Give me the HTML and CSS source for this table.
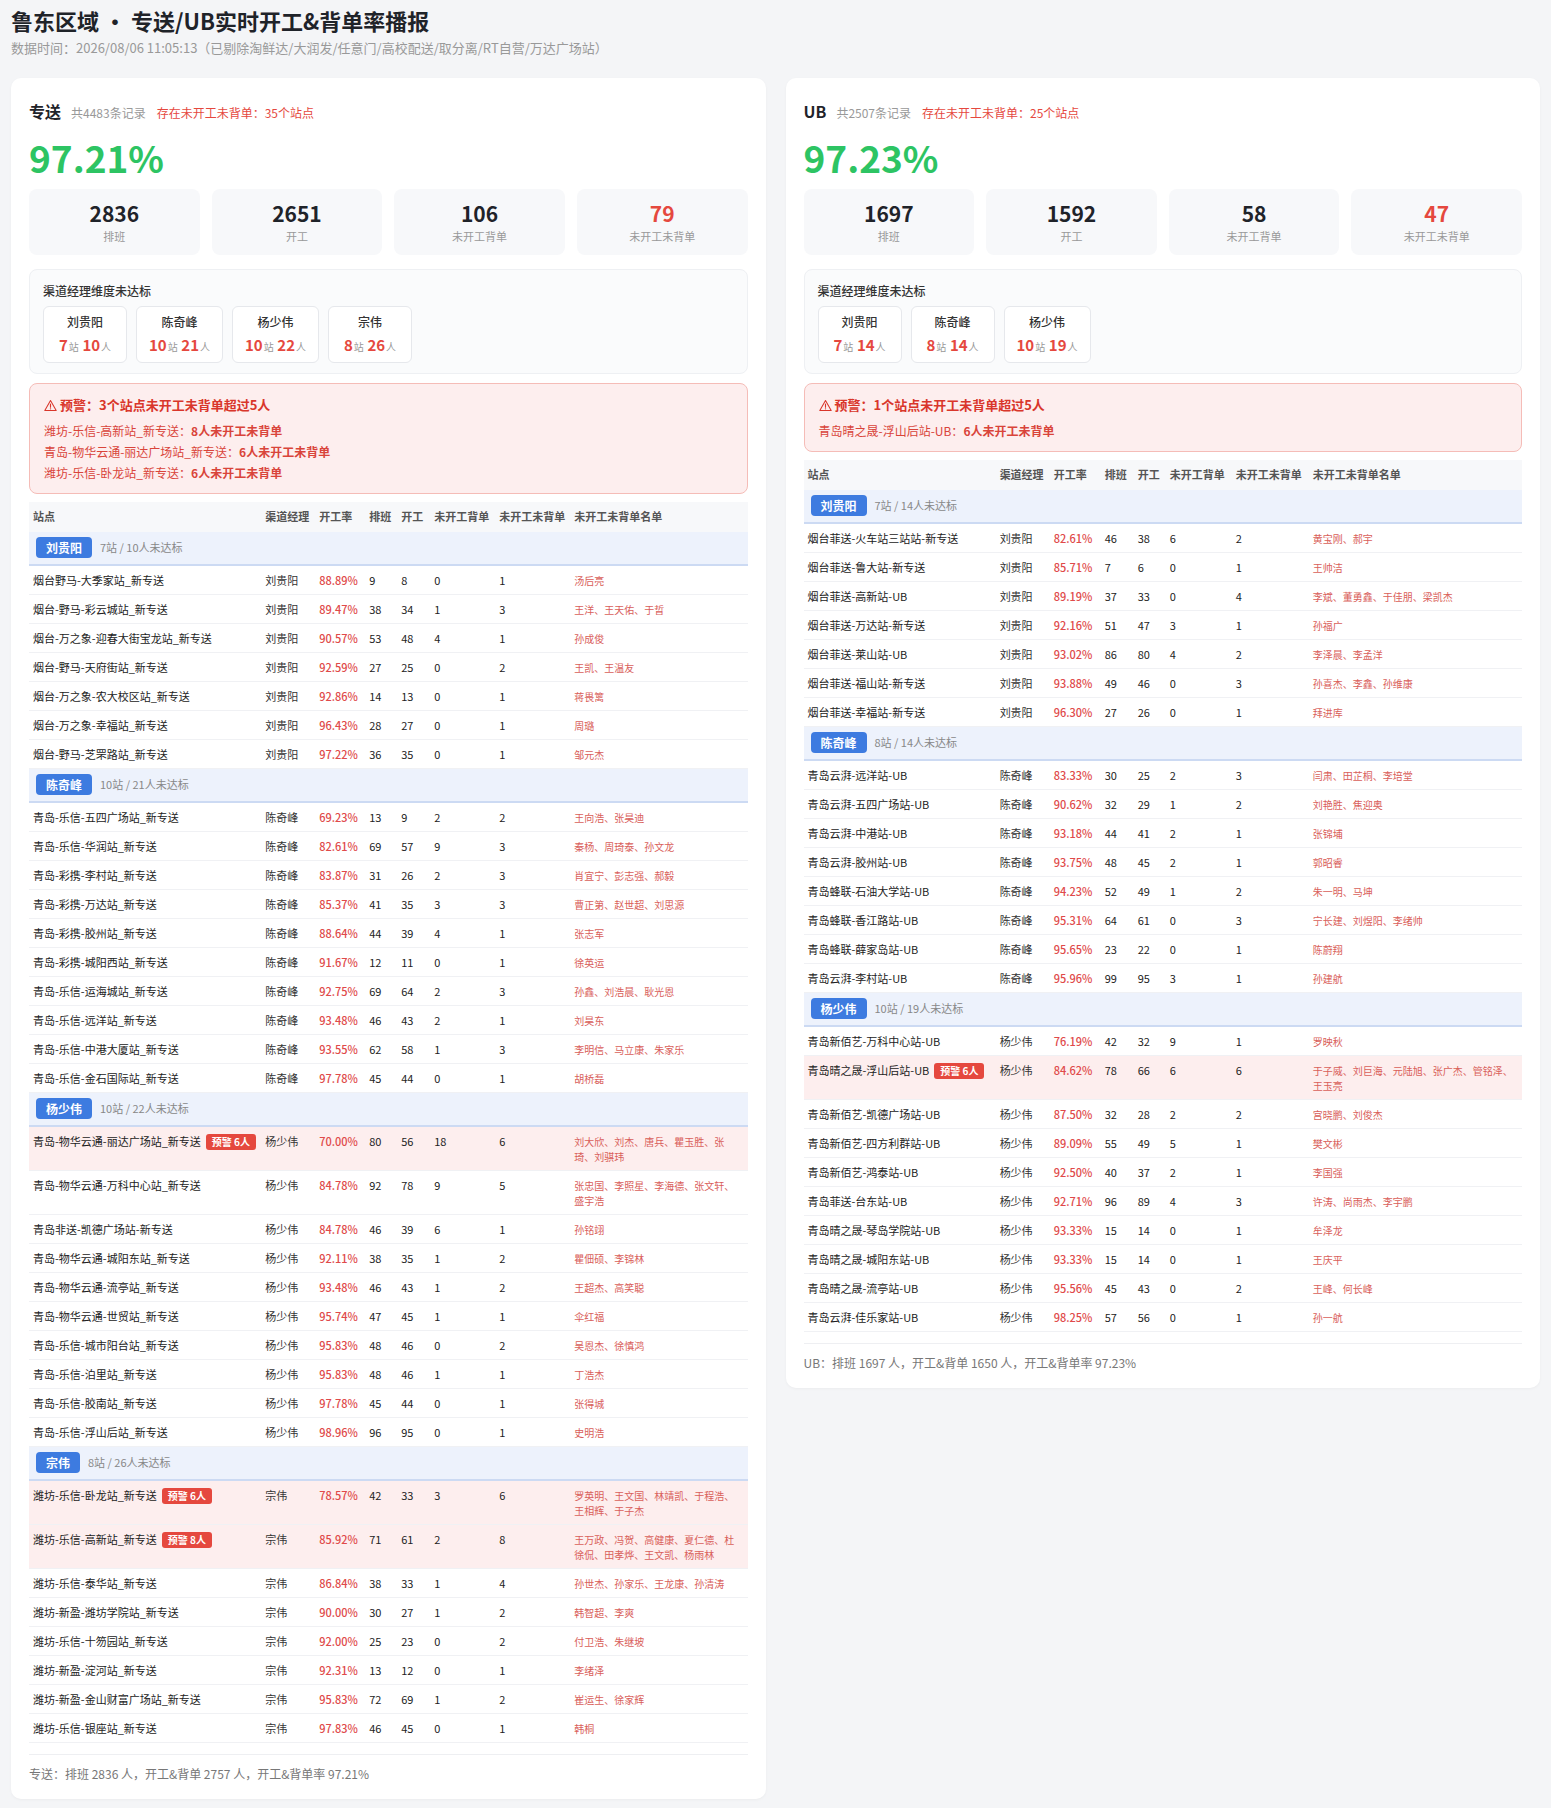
FILE: index.html
```html
<!DOCTYPE html>
<html lang="zh-CN">
<head>
<meta charset="utf-8">
<title>鲁东区域 专送/UB实时开工&amp;背单率播报</title>
<link rel="stylesheet" href="styles.css">
</head>
<body>
<div class="page">
  <h1 class="title">鲁东区域 • 专送/UB实时开工&amp;背单率播报</h1>
  <div class="subtitle">数据时间：2026/08/06 11:05:13（已剔除淘鲜达/大润发/任意门/高校配送/取分离/RT自营/万达广场站）</div>

  <div class="cols">
    <!-- 专送 -->
    <section class="card">
      <div class="card-head">
        <span class="card-name">专送</span>
        <span class="card-count">共4483条记录</span>
        <span class="card-warn">存在未开工未背单：35个站点</span>
      </div>
      <div class="big-rate">97.21%</div>
      <div class="stats">
        <div class="stat"><div class="stat-num">2836</div><div class="stat-label">排班</div></div>
        <div class="stat"><div class="stat-num">2651</div><div class="stat-label">开工</div></div>
        <div class="stat"><div class="stat-num">106</div><div class="stat-label">未开工背单</div></div>
        <div class="stat"><div class="stat-num red">79</div><div class="stat-label">未开工未背单</div></div>
      </div>
      <div class="mgr-box">
        <div class="mgr-title">渠道经理维度未达标</div>
        <div class="chips">
          <div class="chip"><div class="chip-name">刘贵阳</div><div class="chip-count"><b>7</b><span>站</span> <b>10</b><span>人</span></div></div>
          <div class="chip"><div class="chip-name">陈奇峰</div><div class="chip-count"><b>10</b><span>站</span> <b>21</b><span>人</span></div></div>
          <div class="chip"><div class="chip-name">杨少伟</div><div class="chip-count"><b>10</b><span>站</span> <b>22</b><span>人</span></div></div>
          <div class="chip"><div class="chip-name">宗伟</div><div class="chip-count"><b>8</b><span>站</span> <b>26</b><span>人</span></div></div>
        </div>
      </div>
      <div class="alert">
        <div class="alert-title"><svg class="warn-ico" viewBox="0 0 16 16"><path d="M8 1.8 L15 14.2 H1 Z" fill="none" stroke="currentColor" stroke-width="1.3" stroke-linejoin="round"/><path d="M8 6.2v3.8" stroke="currentColor" stroke-width="1.4" stroke-linecap="round"/><circle cx="8" cy="12.1" r="0.85" fill="currentColor"/></svg>预警：3个站点未开工未背单超过5人</div>
        <div class="alert-line">潍坊-乐信-高新站_新专送：<b>8人未开工未背单</b></div>
        <div class="alert-line">青岛-物华云通-丽达广场站_新专送：<b>6人未开工未背单</b></div>
        <div class="alert-line">潍坊-乐信-卧龙站_新专送：<b>6人未开工未背单</b></div>
      </div>
      <table class="tbl tbl-zs">
        <colgroup><col class="c-st"><col class="c-mg"><col class="c-rt"><col class="c-pb"><col class="c-kg"><col class="c-bd"><col class="c-nb"><col class="c-nm"></colgroup>
        <thead><tr><th>站点</th><th>渠道经理</th><th>开工率</th><th>排班</th><th>开工</th><th>未开工背单</th><th>未开工未背单</th><th>未开工未背单名单</th></tr></thead>
        <tbody>
          <tr class="grp"><td colspan="8"><span class="grp-badge">刘贵阳</span><span class="grp-info">7站 / 10人未达标</span></td></tr>
          <tr><td>烟台野马-大季家站_新专送</td><td>刘贵阳</td><td class="rate">88.89%</td><td>9</td><td>8</td><td>0</td><td>1</td><td class="names">汤后亮</td></tr>
          <tr><td>烟台-野马-彩云城站_新专送</td><td>刘贵阳</td><td class="rate">89.47%</td><td>38</td><td>34</td><td>1</td><td>3</td><td class="names">王洋、王天佑、于晢</td></tr>
          <tr><td>烟台-万之象-迎春大街宝龙站_新专送</td><td>刘贵阳</td><td class="rate">90.57%</td><td>53</td><td>48</td><td>4</td><td>1</td><td class="names">孙成俊</td></tr>
          <tr><td>烟台-野马-天府街站_新专送</td><td>刘贵阳</td><td class="rate">92.59%</td><td>27</td><td>25</td><td>0</td><td>2</td><td class="names">王凯、王温友</td></tr>
          <tr><td>烟台-万之象-农大校区站_新专送</td><td>刘贵阳</td><td class="rate">92.86%</td><td>14</td><td>13</td><td>0</td><td>1</td><td class="names">蒋畏篱</td></tr>
          <tr><td>烟台-万之象-幸福站_新专送</td><td>刘贵阳</td><td class="rate">96.43%</td><td>28</td><td>27</td><td>0</td><td>1</td><td class="names">周璐</td></tr>
          <tr><td>烟台-野马-芝罘路站_新专送</td><td>刘贵阳</td><td class="rate">97.22%</td><td>36</td><td>35</td><td>0</td><td>1</td><td class="names">邹元杰</td></tr>

          <tr class="grp"><td colspan="8"><span class="grp-badge">陈奇峰</span><span class="grp-info">10站 / 21人未达标</span></td></tr>
          <tr><td>青岛-乐信-五四广场站_新专送</td><td>陈奇峰</td><td class="rate">69.23%</td><td>13</td><td>9</td><td>2</td><td>2</td><td class="names">王向浩、张昊迪</td></tr>
          <tr><td>青岛-乐信-华润站_新专送</td><td>陈奇峰</td><td class="rate">82.61%</td><td>69</td><td>57</td><td>9</td><td>3</td><td class="names">秦杨、周琦泰、孙文龙</td></tr>
          <tr><td>青岛-彩携-李村站_新专送</td><td>陈奇峰</td><td class="rate">83.87%</td><td>31</td><td>26</td><td>2</td><td>3</td><td class="names">肖宜宁、彭志强、郝毅</td></tr>
          <tr><td>青岛-彩携-万达站_新专送</td><td>陈奇峰</td><td class="rate">85.37%</td><td>41</td><td>35</td><td>3</td><td>3</td><td class="names">曹正第、赵世超、刘思源</td></tr>
          <tr><td>青岛-彩携-胶州站_新专送</td><td>陈奇峰</td><td class="rate">88.64%</td><td>44</td><td>39</td><td>4</td><td>1</td><td class="names">张志军</td></tr>
          <tr><td>青岛-彩携-城阳西站_新专送</td><td>陈奇峰</td><td class="rate">91.67%</td><td>12</td><td>11</td><td>0</td><td>1</td><td class="names">徐英运</td></tr>
          <tr><td>青岛-乐信-运海城站_新专送</td><td>陈奇峰</td><td class="rate">92.75%</td><td>69</td><td>64</td><td>2</td><td>3</td><td class="names">孙鑫、刘浩晨、耿光恩</td></tr>
          <tr><td>青岛-乐信-远洋站_新专送</td><td>陈奇峰</td><td class="rate">93.48%</td><td>46</td><td>43</td><td>2</td><td>1</td><td class="names">刘昊东</td></tr>
          <tr><td>青岛-乐信-中港大厦站_新专送</td><td>陈奇峰</td><td class="rate">93.55%</td><td>62</td><td>58</td><td>1</td><td>3</td><td class="names">李明信、马立康、朱家乐</td></tr>
          <tr><td>青岛-乐信-金石国际站_新专送</td><td>陈奇峰</td><td class="rate">97.78%</td><td>45</td><td>44</td><td>0</td><td>1</td><td class="names">胡桥磊</td></tr>

          <tr class="grp"><td colspan="8"><span class="grp-badge">杨少伟</span><span class="grp-info">10站 / 22人未达标</span></td></tr>
          <tr class="warn"><td>青岛-物华云通-丽达广场站_新专送<span class="warn-badge">预警 6人</span></td><td>杨少伟</td><td class="rate">70.00%</td><td>80</td><td>56</td><td>18</td><td>6</td><td class="names">刘大欣、刘杰、唐兵、瞿玉胜、张琦、刘骐玮</td></tr>
          <tr><td>青岛-物华云通-万科中心站_新专送</td><td>杨少伟</td><td class="rate">84.78%</td><td>92</td><td>78</td><td>9</td><td>5</td><td class="names">张忠国、李照星、李海德、张文轩、盛宇浩</td></tr>
          <tr><td>青岛非送-凯德广场站-新专送</td><td>杨少伟</td><td class="rate">84.78%</td><td>46</td><td>39</td><td>6</td><td>1</td><td class="names">孙铭翊</td></tr>
          <tr><td>青岛-物华云通-城阳东站_新专送</td><td>杨少伟</td><td class="rate">92.11%</td><td>38</td><td>35</td><td>1</td><td>2</td><td class="names">瞿佃硕、李锦林</td></tr>
          <tr><td>青岛-物华云通-流亭站_新专送</td><td>杨少伟</td><td class="rate">93.48%</td><td>46</td><td>43</td><td>1</td><td>2</td><td class="names">王超杰、高笑聪</td></tr>
          <tr><td>青岛-物华云通-世贸站_新专送</td><td>杨少伟</td><td class="rate">95.74%</td><td>47</td><td>45</td><td>1</td><td>1</td><td class="names">伞红福</td></tr>
          <tr><td>青岛-乐信-城市阳台站_新专送</td><td>杨少伟</td><td class="rate">95.83%</td><td>48</td><td>46</td><td>0</td><td>2</td><td class="names">吴恩杰、徐慎鸿</td></tr>
          <tr><td>青岛-乐信-泊里站_新专送</td><td>杨少伟</td><td class="rate">95.83%</td><td>48</td><td>46</td><td>1</td><td>1</td><td class="names">丁浩杰</td></tr>
          <tr><td>青岛-乐信-胶南站_新专送</td><td>杨少伟</td><td class="rate">97.78%</td><td>45</td><td>44</td><td>0</td><td>1</td><td class="names">张得城</td></tr>
          <tr><td>青岛-乐信-浮山后站_新专送</td><td>杨少伟</td><td class="rate">98.96%</td><td>96</td><td>95</td><td>0</td><td>1</td><td class="names">史明浩</td></tr>

          <tr class="grp"><td colspan="8"><span class="grp-badge">宗伟</span><span class="grp-info">8站 / 26人未达标</span></td></tr>
          <tr class="warn"><td>潍坊-乐信-卧龙站_新专送<span class="warn-badge">预警 6人</span></td><td>宗伟</td><td class="rate">78.57%</td><td>42</td><td>33</td><td>3</td><td>6</td><td class="names">罗英明、王文国、林靖凯、于程浩、王相辉、于子杰</td></tr>
          <tr class="warn"><td>潍坊-乐信-高新站_新专送<span class="warn-badge">预警 8人</span></td><td>宗伟</td><td class="rate">85.92%</td><td>71</td><td>61</td><td>2</td><td>8</td><td class="names">王万政、冯贺、高健康、夏仁德、杜徐侃、田孝烨、王文凯、杨雨林</td></tr>
          <tr><td>潍坊-乐信-泰华站_新专送</td><td>宗伟</td><td class="rate">86.84%</td><td>38</td><td>33</td><td>1</td><td>4</td><td class="names">孙世杰、孙家乐、王龙康、孙清涛</td></tr>
          <tr><td>潍坊-新盈-潍坊学院站_新专送</td><td>宗伟</td><td class="rate">90.00%</td><td>30</td><td>27</td><td>1</td><td>2</td><td class="names">韩智超、李爽</td></tr>
          <tr><td>潍坊-乐信-十笏园站_新专送</td><td>宗伟</td><td class="rate">92.00%</td><td>25</td><td>23</td><td>0</td><td>2</td><td class="names">付卫浩、朱继坡</td></tr>
          <tr><td>潍坊-新盈-淀河站_新专送</td><td>宗伟</td><td class="rate">92.31%</td><td>13</td><td>12</td><td>0</td><td>1</td><td class="names">李绪泽</td></tr>
          <tr><td>潍坊-新盈-金山财富广场站_新专送</td><td>宗伟</td><td class="rate">95.83%</td><td>72</td><td>69</td><td>1</td><td>2</td><td class="names">崔运生、徐家辉</td></tr>
          <tr><td>潍坊-乐信-银座站_新专送</td><td>宗伟</td><td class="rate">97.83%</td><td>46</td><td>45</td><td>0</td><td>1</td><td class="names">韩桐</td></tr>
        </tbody>
      </table>
      <div class="card-foot">专送：排班 2836 人，开工&amp;背单 2757 人，开工&amp;背单率 97.21%</div>
    </section>

    <!-- UB -->
    <section class="card">
      <div class="card-head">
        <span class="card-name">UB</span>
        <span class="card-count">共2507条记录</span>
        <span class="card-warn">存在未开工未背单：25个站点</span>
      </div>
      <div class="big-rate">97.23%</div>
      <div class="stats">
        <div class="stat"><div class="stat-num">1697</div><div class="stat-label">排班</div></div>
        <div class="stat"><div class="stat-num">1592</div><div class="stat-label">开工</div></div>
        <div class="stat"><div class="stat-num">58</div><div class="stat-label">未开工背单</div></div>
        <div class="stat"><div class="stat-num red">47</div><div class="stat-label">未开工未背单</div></div>
      </div>
      <div class="mgr-box">
        <div class="mgr-title">渠道经理维度未达标</div>
        <div class="chips">
          <div class="chip"><div class="chip-name">刘贵阳</div><div class="chip-count"><b>7</b><span>站</span> <b>14</b><span>人</span></div></div>
          <div class="chip"><div class="chip-name">陈奇峰</div><div class="chip-count"><b>8</b><span>站</span> <b>14</b><span>人</span></div></div>
          <div class="chip"><div class="chip-name">杨少伟</div><div class="chip-count"><b>10</b><span>站</span> <b>19</b><span>人</span></div></div>
        </div>
      </div>
      <div class="alert">
        <div class="alert-title"><svg class="warn-ico" viewBox="0 0 16 16"><path d="M8 1.8 L15 14.2 H1 Z" fill="none" stroke="currentColor" stroke-width="1.3" stroke-linejoin="round"/><path d="M8 6.2v3.8" stroke="currentColor" stroke-width="1.4" stroke-linecap="round"/><circle cx="8" cy="12.1" r="0.85" fill="currentColor"/></svg>预警：1个站点未开工未背单超过5人</div>
        <div class="alert-line">青岛晴之晟-浮山后站-UB：<b>6人未开工未背单</b></div>
      </div>
      <table class="tbl tbl-ub">
        <colgroup><col class="c-st"><col class="c-mg"><col class="c-rt"><col class="c-pb"><col class="c-kg"><col class="c-bd"><col class="c-nb"><col class="c-nm"></colgroup>
        <thead><tr><th>站点</th><th>渠道经理</th><th>开工率</th><th>排班</th><th>开工</th><th>未开工背单</th><th>未开工未背单</th><th>未开工未背单名单</th></tr></thead>
        <tbody>
          <tr class="grp"><td colspan="8"><span class="grp-badge">刘贵阳</span><span class="grp-info">7站 / 14人未达标</span></td></tr>
          <tr><td>烟台菲送-火车站三站站-新专送</td><td>刘贵阳</td><td class="rate">82.61%</td><td>46</td><td>38</td><td>6</td><td>2</td><td class="names">黄宝刚、郝宇</td></tr>
          <tr><td>烟台菲送-鲁大站-新专送</td><td>刘贵阳</td><td class="rate">85.71%</td><td>7</td><td>6</td><td>0</td><td>1</td><td class="names">王帅洁</td></tr>
          <tr><td>烟台菲送-高新站-UB</td><td>刘贵阳</td><td class="rate">89.19%</td><td>37</td><td>33</td><td>0</td><td>4</td><td class="names">李斌、董勇鑫、于佳朋、梁凯杰</td></tr>
          <tr><td>烟台菲送-万达站-新专送</td><td>刘贵阳</td><td class="rate">92.16%</td><td>51</td><td>47</td><td>3</td><td>1</td><td class="names">孙福广</td></tr>
          <tr><td>烟台菲送-莱山站-UB</td><td>刘贵阳</td><td class="rate">93.02%</td><td>86</td><td>80</td><td>4</td><td>2</td><td class="names">李泽晨、李孟洋</td></tr>
          <tr><td>烟台菲送-福山站-新专送</td><td>刘贵阳</td><td class="rate">93.88%</td><td>49</td><td>46</td><td>0</td><td>3</td><td class="names">孙喜杰、李鑫、孙维康</td></tr>
          <tr><td>烟台菲送-幸福站-新专送</td><td>刘贵阳</td><td class="rate">96.30%</td><td>27</td><td>26</td><td>0</td><td>1</td><td class="names">拜进库</td></tr>

          <tr class="grp"><td colspan="8"><span class="grp-badge">陈奇峰</span><span class="grp-info">8站 / 14人未达标</span></td></tr>
          <tr><td>青岛云湃-远洋站-UB</td><td>陈奇峰</td><td class="rate">83.33%</td><td>30</td><td>25</td><td>2</td><td>3</td><td class="names">闫肃、田芷桐、李培堂</td></tr>
          <tr><td>青岛云湃-五四广场站-UB</td><td>陈奇峰</td><td class="rate">90.62%</td><td>32</td><td>29</td><td>1</td><td>2</td><td class="names">刘艳胜、焦迎奥</td></tr>
          <tr><td>青岛云湃-中港站-UB</td><td>陈奇峰</td><td class="rate">93.18%</td><td>44</td><td>41</td><td>2</td><td>1</td><td class="names">张锦埔</td></tr>
          <tr><td>青岛云湃-胶州站-UB</td><td>陈奇峰</td><td class="rate">93.75%</td><td>48</td><td>45</td><td>2</td><td>1</td><td class="names">郭昭睿</td></tr>
          <tr><td>青岛蜂联-石油大学站-UB</td><td>陈奇峰</td><td class="rate">94.23%</td><td>52</td><td>49</td><td>1</td><td>2</td><td class="names">朱一明、马坤</td></tr>
          <tr><td>青岛蜂联-香江路站-UB</td><td>陈奇峰</td><td class="rate">95.31%</td><td>64</td><td>61</td><td>0</td><td>3</td><td class="names">宁长建、刘煜阳、李绪帅</td></tr>
          <tr><td>青岛蜂联-薛家岛站-UB</td><td>陈奇峰</td><td class="rate">95.65%</td><td>23</td><td>22</td><td>0</td><td>1</td><td class="names">陈蔚翔</td></tr>
          <tr><td>青岛云湃-李村站-UB</td><td>陈奇峰</td><td class="rate">95.96%</td><td>99</td><td>95</td><td>3</td><td>1</td><td class="names">孙建航</td></tr>

          <tr class="grp"><td colspan="8"><span class="grp-badge">杨少伟</span><span class="grp-info">10站 / 19人未达标</span></td></tr>
          <tr><td>青岛新佰艺-万科中心站-UB</td><td>杨少伟</td><td class="rate">76.19%</td><td>42</td><td>32</td><td>9</td><td>1</td><td class="names">罗映秋</td></tr>
          <tr class="warn"><td>青岛晴之晟-浮山后站-UB<span class="warn-badge">预警 6人</span></td><td>杨少伟</td><td class="rate">84.62%</td><td>78</td><td>66</td><td>6</td><td>6</td><td class="names">于子威、刘巨海、元陆旭、张广杰、管铭泽、王玉亮</td></tr>
          <tr><td>青岛新佰艺-凯德广场站-UB</td><td>杨少伟</td><td class="rate">87.50%</td><td>32</td><td>28</td><td>2</td><td>2</td><td class="names">宫晓鹏、刘俊杰</td></tr>
          <tr><td>青岛新佰艺-四方利群站-UB</td><td>杨少伟</td><td class="rate">89.09%</td><td>55</td><td>49</td><td>5</td><td>1</td><td class="names">樊文彬</td></tr>
          <tr><td>青岛新佰艺-鸿泰站-UB</td><td>杨少伟</td><td class="rate">92.50%</td><td>40</td><td>37</td><td>2</td><td>1</td><td class="names">李国强</td></tr>
          <tr><td>青岛菲送-台东站-UB</td><td>杨少伟</td><td class="rate">92.71%</td><td>96</td><td>89</td><td>4</td><td>3</td><td class="names">许涛、尚雨杰、李宇鹏</td></tr>
          <tr><td>青岛晴之晟-琴岛学院站-UB</td><td>杨少伟</td><td class="rate">93.33%</td><td>15</td><td>14</td><td>0</td><td>1</td><td class="names">牟泽龙</td></tr>
          <tr><td>青岛晴之晟-城阳东站-UB</td><td>杨少伟</td><td class="rate">93.33%</td><td>15</td><td>14</td><td>0</td><td>1</td><td class="names">王庆平</td></tr>
          <tr><td>青岛晴之晟-流亭站-UB</td><td>杨少伟</td><td class="rate">95.56%</td><td>45</td><td>43</td><td>0</td><td>2</td><td class="names">王峰、何长峰</td></tr>
          <tr><td>青岛云湃-佳乐家站-UB</td><td>杨少伟</td><td class="rate">98.25%</td><td>57</td><td>56</td><td>0</td><td>1</td><td class="names">孙一航</td></tr>
        </tbody>
      </table>
      <div class="card-foot">UB：排班 1697 人，开工&amp;背单 1650 人，开工&amp;背单率 97.23%</div>
    </section>
  </div>
</div>
</body>
</html>
```

FILE: styles.css
```css
* { box-sizing: border-box; }

body {
  margin: 0;
  background: #f4f5f7;
  font-family: "Noto Sans CJK SC", "Noto Sans", sans-serif;
  color: #222;
}

.page {
  padding: 8px 11px 9px;
}

.title {
  margin: 0;
  font-size: 22px;
  line-height: 24px;
  font-weight: 700;
  color: #1f2329;
}

.subtitle {
  margin-top: 7px;
  font-size: 13px;
  line-height: 18px;
  color: #999;
}

.cols {
  display: flex;
  gap: 20px;
  align-items: flex-start;
  margin-top: 21px;
}

.card {
  flex: 1 1 0;
  min-width: 0;
  background: #fff;
  border-radius: 10px;
  padding: 22px 18px 16px;
  box-shadow: 0 1px 3px rgba(0, 0, 0, 0.04);
}

.card-head {
  display: flex;
  align-items: baseline;
  line-height: 22px;
}

.card-name {
  font-size: 16px;
  font-weight: 700;
  color: #1f2329;
  margin-right: 10px;
}

.card-count {
  font-size: 12px;
  color: #999;
  margin-right: 11px;
}

.card-warn {
  font-size: 12px;
  color: #e5483e;
}

.big-rate {
  margin-top: 10px;
  font-size: 37px;
  line-height: 46px;
  font-weight: 700;
  color: #2dc463;
}

.stats {
  margin-top: 9px;
  display: grid;
  grid-template-columns: repeat(4, 1fr);
  gap: 12px;
}

.stat {
  background: #f7f8fa;
  border-radius: 8px;
  padding: 10px 0 9px;
  text-align: center;
}

.stat-num {
  font-size: 21px;
  line-height: 28px;
  font-weight: 700;
  color: #1f2329;
}

.stat-num.red { color: #e5483e; }

.stat-label {
  font-size: 11px;
  line-height: 19px;
  color: #999;
}

.mgr-box {
  margin-top: 14px;
  background: #fafbfc;
  border: 1px solid #eef0f3;
  border-radius: 8px;
  padding: 12px 13px 10px;
}

.mgr-title {
  font-size: 12px;
  line-height: 18px;
  font-weight: 500;
  color: #333;
}

.chips {
  margin-top: 6px;
  display: flex;
  gap: 9px;
}

.chip {
  min-width: 84px;
  background: #fff;
  border: 1px solid #e6e8ec;
  border-radius: 6px;
  padding: 6px 12px 4px;
  text-align: center;
}

.chip-name {
  font-size: 12px;
  line-height: 18px;
  font-weight: 500;
  color: #333;
}

.chip-count {
  margin-top: 2px;
  line-height: 22px;
  white-space: nowrap;
}

.chip-count b {
  font-size: 15px;
  font-weight: 700;
  color: #e5483e;
}

.chip-count span {
  font-size: 10px;
  color: #999;
  margin-left: 1px;
}

.alert {
  margin-top: 9px;
  background: #fdeeee;
  border: 1px solid #f5bcb7;
  border-radius: 8px;
  padding: 11px 14px 10px;
}

.alert-title {
  font-size: 13px;
  line-height: 20px;
  font-weight: 700;
  color: #d9362b;
  display: flex;
  align-items: center;
}

.warn-ico {
  width: 13px;
  height: 13px;
  margin-right: 3px;
  color: #d9362b;
}

.alert-line {
  font-size: 12px;
  line-height: 21px;
  color: #d9443a;
}

.alert-title + .alert-line { margin-top: 5px; }

.alert-line b { font-weight: 700; }

.tbl {
  margin-top: 8px;
  width: 100%;
  border-collapse: collapse;
  table-layout: fixed;
  font-size: 11px;
}

.tbl-zs .c-st { width: 232px; }
.tbl-zs .c-mg { width: 54px; }
.tbl-zs .c-rt { width: 50px; }
.tbl-zs .c-pb { width: 32px; }
.tbl-zs .c-kg { width: 33px; }
.tbl-zs .c-bd { width: 65px; }
.tbl-zs .c-nb { width: 75px; }
.tbl-zs .c-nm { width: 177px; }

.tbl-ub .c-st { width: 192px; }
.tbl-ub .c-mg { width: 54px; }
.tbl-ub .c-rt { width: 51px; }
.tbl-ub .c-pb { width: 33px; }
.tbl-ub .c-kg { width: 32px; }
.tbl-ub .c-bd { width: 66px; }
.tbl-ub .c-nb { width: 77px; }
.tbl-ub .c-nm { width: 213px; }

.tbl th {
  background: #f7f8fa;
  text-align: left;
  font-weight: 700;
  color: #555;
  line-height: 15px;
  padding: 7px 4px 8px;
  white-space: nowrap;
  overflow: hidden;
}

.tbl td {
  vertical-align: top;
  line-height: 15px;
  padding: 7px 4px 6px;
  border-bottom: 1px solid #f0f1f4;
  color: #222;
}

.tbl td:nth-child(2) { color: #333; }

.tbl td.rate {
  color: #e04a4a;
  font-weight: 500;
}

.tbl td.names {
  font-size: 10px;
  line-height: 15px;
  color: #d9605a;
}

.tbl tr.warn td { background: #fdeeee; }

.tbl tr.grp td {
  background: #edf2fc;
  border-bottom: 2px solid #ccdaf3;
  padding: 5px 7px 6px;
  line-height: 21px;
}

.grp-badge {
  display: inline-block;
  background: #3d7be0;
  color: #fff;
  font-size: 12px;
  font-weight: 700;
  line-height: 21px;
  padding: 0 10px;
  border-radius: 4px;
  vertical-align: top;
}

.grp-info {
  margin-left: 8px;
  font-size: 11px;
  color: #888;
  vertical-align: top;
}

.warn-badge {
  display: inline-block;
  margin-left: 5px;
  background: #e5483e;
  color: #fff;
  font-size: 10px;
  font-weight: 700;
  line-height: 14px;
  padding: 1px 6px;
  border-radius: 3px;
  vertical-align: top;
}

.card-foot {
  margin-top: 11px;
  border-top: 1px solid #eeeff2;
  padding-top: 10px;
  font-size: 12px;
  line-height: 18px;
  color: #777;
}
```
